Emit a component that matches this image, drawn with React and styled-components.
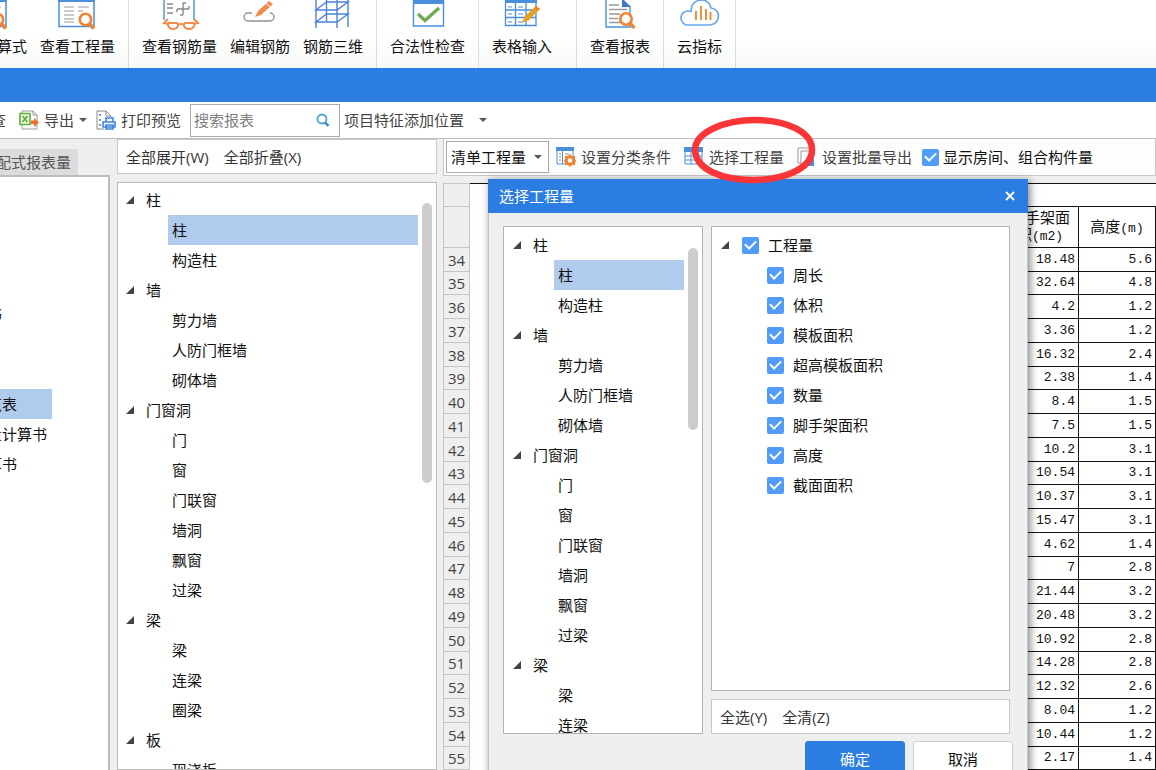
import React, { useState } from "react";
import styled, { createGlobalStyle } from "styled-components";

const GlobalStyle = createGlobalStyle`
  * {
    box-sizing: border-box;
  }

  body {
    margin: 0;
    font-family: "Open Sans", "Noto Sans CJK SC", sans-serif;
    font-size: 15px;
    line-height: 20px;
    color: #111;
    background: #efefef;
  }

  button,
  input,
  select {
    font: inherit;
    color: inherit;
  }
`;

const componentTree = [
  { name: "柱", children: ["柱", "构造柱"] },
  { name: "墙", children: ["剪力墙", "人防门框墙", "砌体墙"] },
  { name: "门窗洞", children: ["门", "窗", "门联窗", "墙洞", "飘窗", "过梁"] },
  { name: "梁", children: ["梁", "连梁", "圈梁"] },
  { name: "板", children: ["现浇板"] },
];

const quantities = [
  "周长",
  "体积",
  "模板面积",
  "超高模板面积",
  "数量",
  "脚手架面积",
  "高度",
  "截面面积",
];

const sheetRows = [
  [34, "18.48", "5.6"],
  [35, "32.64", "4.8"],
  [36, "4.2", "1.2"],
  [37, "3.36", "1.2"],
  [38, "16.32", "2.4"],
  [39, "2.38", "1.4"],
  [40, "8.4", "1.5"],
  [41, "7.5", "1.5"],
  [42, "10.2", "3.1"],
  [43, "10.54", "3.1"],
  [44, "10.37", "3.1"],
  [45, "15.47", "3.1"],
  [46, "4.62", "1.4"],
  [47, "7", "2.8"],
  [48, "21.44", "3.2"],
  [49, "20.48", "3.2"],
  [50, "10.92", "2.8"],
  [51, "14.28", "2.8"],
  [52, "12.32", "2.6"],
  [53, "8.04", "1.2"],
  [54, "10.44", "1.2"],
  [55, "2.17", "1.4"],
];

const BLUE = "#4a8fdc";
const ORANGE = "#f0832f";

function Magnifier({ x, y }) {
  return (
    <g transform={`translate(${x} ${y})`} stroke={ORANGE} fill="none">
      <circle r="5.7" strokeWidth="2.6" fill="#fff" />
      <path d="M4.3 4.5L8.3 9" strokeWidth="3.4" />
    </g>
  );
}

const ribbonIcons = {
  quantity: (
    <>
      <path d="M2 0V26.5H37V0" fill="#fff" stroke={BLUE} strokeWidth="1.5" />
      <path d="M1 0H38V2H1z" fill={BLUE} />
      <path
        d="M7 7H17M7 11H17M7 15H17M7 19H17M7 22H17M21 7H32M21 11H26"
        stroke="#9a9a9a"
        strokeWidth="1.2"
      />
      <Magnifier x={28.5} y={19.5} />
    </>
  ),
  rebar: (
    <>
      <path d="M4 20V-2M34 20V-2" stroke={BLUE} strokeWidth="1.4" />
      <path d="M7 4H13M7 8H13M7 13H13" stroke="#888" strokeWidth="1.3" />
      <path
        d="M23 3V15M17 9H29M17 12V9M29 6V9M23 3H26M23 15H20"
        stroke="#888"
        strokeWidth="1.4"
        fill="none"
      />
      <g fill="none" stroke="#f28a4b" strokeWidth="2">
        <path d="M9 23H16Q19 23 18 26Q17 29 13 29Q9 29 8 25Q7.500 23 9 23z" />
        <path d="M26 23H33Q35 23 34 26Q33 29 29 29Q25 29 24 26Q23.500 23 26 23z" />
        <path d="M18 25Q21 23 24 25M8 24L4 23L8 19M34 24L38 23L34 19" />
      </g>
    </>
  ),
  edit: (
    <>
      <path
        d="M12 13H8a4 4 0 0 0 0 8H30a4 4 0 0 0 0-8"
        fill="none"
        stroke="#8d939b"
        strokeWidth="1.4"
      />
      <path d="M15 17l3-6L29 1l4 3-12 11z" fill="#ef8b4d" />
      <path d="M26 3.500l4 3" stroke="#fff" />
    </>
  ),
  three: (
    <g fill="none" stroke="#4a82dc" strokeWidth="1.4">
      <path d="M3 -1V28M13.500 -1V22M24 -1V28M35 -1V27" />
      <path d="M3 10H24L35 2H13.500zM3 22H24L35 14H13.500z" />
    </g>
  ),
  check: (
    <>
      <path d="M5.500 0V26H35.500V0" fill="#fff" stroke={BLUE} strokeWidth="1.4" />
      <path d="M5 0H36V4H5z" fill={BLUE} />
      <path d="M10 14l7 6.500L31 8" fill="none" stroke="#70ad52" strokeWidth="3.4" />
    </>
  ),
  table: (
    <>
      <path d="M3.500 0H34V25.500H3.500z" fill="#fff" stroke={BLUE} strokeWidth="1.3" />
      <path d="M3 0H35V3H3z" fill={BLUE} />
      <path
        d="M3 10H34M3 17.500H34M13.500 3V26M24 3V26"
        stroke={BLUE}
        strokeWidth="1.3"
      />
      <path d="M6 7H10M16 7H21M6 14H10M16 14H21M6 22H10M16 22H21" stroke={BLUE} />
      <path d="M20 23l3-7L34 6l4 3-11 11z" fill="#e8a021" />
      <path d="M33 7l4 4" stroke="#fff" />
      <path d="M34 6l4 3-2 2-4-3z" fill={ORANGE} />
    </>
  ),
  report: (
    <>
      <path d="M6 0V27H30V7L23 0" fill="#fff" stroke={BLUE} strokeWidth="1.4" />
      <path d="M22 -1V7H31z" fill="#3c78c8" />
      <path
        d="M9 5H19M9 9.500H27M9 14H20M9 18.500H18M9 22.500H20"
        stroke="#9a9a9a"
        strokeWidth="1.3"
      />
      <Magnifier x={26} y={19} />
    </>
  ),
  cloud: (
    <>
      <path
        d="M11 25H8.500a7 7 0 0 1-1-14Q9 11 11 11.500Q11 1 21 0Q29 0 31 8Q38 9 38.500 16Q38 24 30 25z"
        fill="#fff"
        stroke="#6aa8ee"
        strokeWidth="1.7"
      />
      <path d="M16 20V11M21 20V6M26 20V9M30.500 20V12" stroke={ORANGE} strokeWidth="1.8" />
    </>
  ),
};

const smallIcons = {
  exporting: (
    <>
      <path d="M3 1H14L18 5V19H3z" fill="#fff" stroke="#999" />
      <path d="M14 1V5H18" fill="none" stroke="#999" />
      <path d="M1 3.500H11V14.500H1z" fill="#eefae8" stroke="#5cb036" strokeWidth="1.6" />
      <path d="M3.500 6l5 6M8.500 6l-5 6" stroke="#5cb036" strokeWidth="1.8" />
      <path d="M12 10.500H15V8l5 4.500-5 4.500V14H12z" fill="#f0702a" />
    </>
  ),
  print: (
    <>
      <path d="M8 19H1V1H10L15 6V7" fill="#fff" stroke="#888" />
      <path d="M10 1V6H15" fill="none" stroke="#888" />
      <path d="M3 5H5M3 10H5M3 15H5" stroke="#6d9ade" strokeWidth="2" />
      <path d="M10 8H17V12H10zM7 12H19V17H7zM10 15H17V19H10z" fill="#fff" stroke="#3d84e0" strokeWidth="1.6" />
    </>
  ),
  settings: (
    <>
      <path d="M1 1H17V17H1z" fill="#fff" stroke={BLUE} />
      <path d="M0 0H18V4H0zM6 4H7V17H6z" fill={BLUE} />
      <path d="M3 7H5M3 10H5M3 13H5M9 7H13M9 10H11" stroke="#888" />
      <path d="M14 7l2 2h3v3l1 2-1 2v2h-3l-2 2-2-2H9v-2l-1-2 1-2V9h3z" fill={ORANGE} />
      <circle cx="14" cy="13.500" r="2.300" fill="#fff" />
    </>
  ),
  grid: (
    <>
      <path d="M1 1H18V17H1z" fill="#fff" stroke={BLUE} />
      <path d="M0 0H19V5H0z" fill={BLUE} />
      <path d="M1 9H18M1 13H18M7 5V17M13 5V17" stroke={BLUE} />
    </>
  ),
  batch: (
    <>
      <path d="M4 16H1V1H14" fill="none" stroke="#999" />
      <path d="M4 4H14V18H4z" fill="#fff" stroke="#999" />
      <path d="M17 11V19H9z" fill={BLUE} />
    </>
  ),
};

const RibbonIcon = ({ name }) => (
  <svg width="40" height="32" viewBox="0 0 40 32" aria-hidden="true">
    {ribbonIcons[name]}
  </svg>
);

const SmallIcon = ({ name }) => (
  <svg width="20" height="20" viewBox="0 0 20 20" aria-hidden="true">
    {smallIcons[name]}
  </svg>
);

const Caret = () => (
  <CaretSvg width="8" height="4" viewBox="0 0 8 4" aria-hidden="true">
    <path d="M0 0H8L4 4z" fill="#555" />
  </CaretSvg>
);

const Arrow = () => (
  <svg width="8" height="8" viewBox="0 0 8 8" aria-hidden="true">
    <path d="M8 0V8H0z" fill="#444" />
  </svg>
);

function Tool({ icon, label, drop }) {
  return (
    <ToolButton type="button">
      {icon && <SmallIcon name={icon} />}
      {label}
      {drop && <Caret />}
    </ToolButton>
  );
}

function RibbonItem({ icon, label }) {
  return (
    <RibbonButton type="button">
      <RibbonIcon name={icon} />
      {label}
    </RibbonButton>
  );
}

function Tree({ narrow }) {
  const [selected, setSelected] = useState("0-0");
  return (
    <TreeList>
      {componentTree.map((group, i) => (
        <li key={group.name}>
          <TreeGroup>
            <Arrow />
            {group.name}
          </TreeGroup>
          <TreeChildren $narrow={narrow}>
            {group.children.map((child, j) => (
              <li key={child}>
                <TreeLeaf
                  type="button"
                  $active={selected === `${i}-${j}`}
                  onClick={() => setSelected(`${i}-${j}`)}
                >
                  {child}
                </TreeLeaf>
              </li>
            ))}
          </TreeChildren>
        </li>
      ))}
    </TreeList>
  );
}

function CheckRow({ label, root }) {
  return (
    <CheckLabel $root={root}>
      {root && <Arrow />}
      <Tick type="checkbox" defaultChecked />
      {label}
    </CheckLabel>
  );
}

function SelectDialog() {
  return (
    <Dialog role="dialog" aria-label="选择工程量">
      <DialogTitle>
        选择工程量
        <CloseButton type="button" aria-label="关闭">
          <svg width="10" height="10" viewBox="0 0 10 10">
            <path d="M1 1L9 9M9 1L1 9" stroke="#fff" strokeWidth="1.8" />
          </svg>
        </CloseButton>
      </DialogTitle>
      <DialogBody>
        <DialogTree>
          <Tree narrow />
          <Thumb $size={182} />
        </DialogTree>
        <DialogSide>
          <CheckPanel>
            <CheckRow label="工程量" root />
            {quantities.map((q) => (
              <CheckRow key={q} label={q} />
            ))}
          </CheckPanel>
          <ActionBar>
            <TextButton type="button">全选(Y)</TextButton>
            <TextButton type="button">全清(Z)</TextButton>
          </ActionBar>
        </DialogSide>
      </DialogBody>
      <DialogFooter>
        <FootButton type="button" $primary>
          确定
        </FootButton>
        <FootButton type="button">取消</FootButton>
      </DialogFooter>
    </Dialog>
  );
}

export default function App() {
  return (
    <Page>
      <GlobalStyle />
      <Ribbon>
        <RibbonGroup $first>
          <RibbonItem icon="quantity" label="查看计算式" />
          <RibbonItem icon="quantity" label="查看工程量" />
        </RibbonGroup>
        <RibbonGroup>
          <RibbonItem icon="rebar" label="查看钢筋量" />
          <RibbonItem icon="edit" label="编辑钢筋" />
          <RibbonItem icon="three" label="钢筋三维" />
        </RibbonGroup>
        <RibbonGroup>
          <RibbonItem icon="check" label="合法性检查" />
        </RibbonGroup>
        <RibbonGroup $wide>
          <RibbonItem icon="table" label="表格输入" />
        </RibbonGroup>
        <RibbonGroup>
          <RibbonItem icon="report" label="查看报表" />
        </RibbonGroup>
        <RibbonGroup>
          <RibbonItem icon="cloud" label="云指标" />
        </RibbonGroup>
      </Ribbon>
      <TitleBar />

      <Toolbar>
        <CutTool type="button">检查</CutTool>
        <Tool icon="exporting" label="导出" drop />
        <Tool icon="print" label="打印预览" />
        <SearchBox>
          <SearchInput type="search" placeholder="搜索报表" aria-label="搜索报表" />
          <svg width="14" height="14" viewBox="0 0 14 14" aria-hidden="true">
            <circle cx="6" cy="6" r="4.500" fill="none" stroke="#45a5d0" strokeWidth="1.8" />
            <path d="M9 9.500L12.500 13" stroke="#3b7fc4" strokeWidth="2.4" />
          </svg>
        </SearchBox>
        <PositionTool type="button">
          项目特征添加位置
          <Caret />
        </PositionTool>
      </Toolbar>

      <Workspace>
        <ReportColumn>
          <ReportTab>装配式报表量</ReportTab>
          <ReportPanel>
            <ReportItem $width={2}>计算书</ReportItem>
            <ReportGap />
            <ReportItem $width={52} $active>
              构件一览表
            </ReportItem>
            <ReportItem $width={47}>工程量计算书</ReportItem>
            <ReportItem $width={17}>计算书</ReportItem>
          </ReportPanel>
        </ReportColumn>

        <TreeColumn>
          <ActionBar>
            <TextButton type="button">全部展开(W)</TextButton>
            <TextButton type="button">全部折叠(X)</TextButton>
          </ActionBar>
          <TreePanel>
            <Tree />
            <Thumb $size={280} />
          </TreePanel>
        </TreeColumn>

        <SheetColumn>
          <SheetTools>
            <SelectBox>
              <select aria-label="工程量类型" defaultValue="list">
                <option value="list">清单工程量</option>
                <option value="quota">定额工程量</option>
              </select>
              <Caret />
            </SelectBox>
            <Tool icon="settings" label="设置分类条件" />
            <Tool icon="grid" label="选择工程量" />
            <Tool icon="batch" label="设置批量导出" />
            <ShowLabel>
              <Tick type="checkbox" defaultChecked />
              显示房间、组合构件量
            </ShowLabel>
          </SheetTools>
          <Sheet>
            <colgroup>
              <col width="27" />
              <col />
              <col width="77" />
              <col width="77" />
            </colgroup>
            <thead>
              <SheetTop>
                <th aria-label="行号" />
                <td />
                <td colSpan="2" />
              </SheetTop>
              <SheetHead>
                <th aria-label="行号" />
                <td />
                <th scope="col">
                  脚手架面积<Unit>(m2)</Unit>
                </th>
                <th scope="col">
                  高度<Unit>(m)</Unit>
                </th>
              </SheetHead>
            </thead>
            <tbody>
              {sheetRows.map(([no, area, height]) => (
                <SheetRow key={no}>
                  <th scope="row">{no}</th>
                  <td />
                  <td>{area}</td>
                  <td>{height}</td>
                </SheetRow>
              ))}
            </tbody>
          </Sheet>
        </SheetColumn>
      </Workspace>

      <SelectDialog />
      <Highlight viewBox="0 0 126 68" aria-hidden="true">
        <path
          d="M4 34C4 16 34 4 64 4C96 4 122 16 121 35C120 53 92 64 62 64C32 64 5 54 4 34z"
          fill="none"
          stroke="#fb3438"
          strokeWidth="6.5"
        />
      </Highlight>
    </Page>
  );
}

const Page = styled.div`
  position: relative;
  display: flex;
  flex-direction: column;
  height: 100vh;
  overflow: hidden;
`;

const Ribbon = styled.header`
  display: flex;
  flex: none;
  height: 68px;
  background: linear-gradient(#fff 40px, #f7f8f8);
`;

const RibbonGroup = styled.div`
  display: flex;
  justify-content: flex-end;
  gap: 13px;
  width: ${(props) => (props.$first ? "129px" : "auto")};
  padding: 0 ${(props) => (props.$wide ? "24px" : "13px")} 0 13px;
  border-right: 1px solid #dcdcdc;
`;

const RibbonButton = styled.button`
  display: flex;
  flex: none;
  flex-direction: column;
  align-items: center;
  gap: 4px;
  padding: 0;
  border: 0;
  background: none;
  white-space: nowrap;
`;

const TitleBar = styled.div`
  flex: none;
  height: 34px;
  background: #2b7de1;
`;

const Toolbar = styled.div`
  display: flex;
  flex: none;
  align-items: center;
  height: 36px;
  background: #fff;
  color: #333;
`;

const ToolButton = styled.button`
  display: flex;
  flex: none;
  align-items: center;
  gap: 5px;
  margin-right: 9px;
  padding: 0;
  border: 0;
  background: none;
  color: #444;
  white-space: nowrap;
`;

const CutTool = styled(ToolButton)`
  justify-content: flex-end;
  width: 6px;
  margin-right: 13px;
  overflow: hidden;
`;

const PositionTool = styled(ToolButton)`
  gap: 15px;
  margin-left: 4px;
`;

const CaretSvg = styled.svg`
  flex: none;
`;

const SearchBox = styled.div`
  display: flex;
  align-items: center;
  width: 150px;
  height: 33px;
  padding: 0 9px 0 3px;
  border: 1px solid #ababab;
`;

const SearchInput = styled.input`
  flex: 1;
  min-width: 0;
  padding: 0;
  border: 0;
  outline: 0;
  background: none;

  &::placeholder {
    color: #808080;
  }
`;

const Workspace = styled.main`
  display: flex;
  flex: 1;
  min-height: 0;
  border-top: 1px solid #bdbdbd;
`;

const ReportColumn = styled.aside`
  display: flex;
  flex: none;
  flex-direction: column;
  align-items: flex-start;
  width: 110px;
  margin-right: 7px;
  padding-top: 10px;
`;

const ReportTab = styled.div`
  display: flex;
  justify-content: flex-end;
  width: 78px;
  padding: 3px 7px 3px 0;
  overflow: hidden;
  background: #dcdcdc;
  color: #555;
  white-space: nowrap;
`;

const ReportPanel = styled.div`
  flex: 1;
  align-self: stretch;
  padding-top: 122px;
  border-top: 2px solid #bdbdbd;
  border-right: 2px solid #bdbdbd;
  background: #fff;
`;

const ReportItem = styled.div`
  display: flex;
  justify-content: flex-end;
  width: ${(props) => props.$width}px;
  padding: 5px 0;
  padding-right: ${(props) => (props.$active ? "35px" : "0")};
  overflow: hidden;
  background: ${(props) => (props.$active ? "#b1cbec" : "none")};
  white-space: nowrap;
`;

const ReportGap = styled.div`
  height: 60px;
`;

const TreeColumn = styled.section`
  display: flex;
  flex: none;
  flex-direction: column;
  gap: 8px;
  width: 320px;
  margin-right: 6px;
`;

const ActionBar = styled.div`
  display: flex;
  flex: none;
  align-items: center;
  gap: 15px;
  height: 35px;
  padding: 0 8px;
  border: 1px solid #c8c8c8;
  background: #fff;
`;

const TextButton = styled.button`
  padding: 0;
  border: 0;
  background: none;
  color: #333;
`;

const TreePanel = styled.div`
  display: flex;
  flex: 1;
  min-height: 0;
  padding: 2px 4px 0 8px;
  overflow: hidden;
  border: 1px solid #bababa;
  background: #fff;
`;

const Thumb = styled.div`
  flex: none;
  width: 10px;
  height: ${(props) => props.$size}px;
  margin-top: 18px;
  margin-left: 4px;
  border-radius: 5px;
  background: #cdcdcd;
`;

const TreeList = styled.ul`
  flex: 1;
  margin: 0;
  padding: 0;
  list-style: none;
`;

const TreeGroup = styled.div`
  display: flex;
  align-items: center;
  gap: 12px;
  height: 30px;
`;

const TreeChildren = styled.ul`
  margin: 0;
  padding-left: ${(props) => (props.$narrow ? "41px" : "42px")};
  list-style: none;
`;

const TreeLeaf = styled.button`
  display: block;
  width: 100%;
  height: 30px;
  padding: 0 4px;
  border: 0;
  background: ${(props) => (props.$active ? "#b1cbec" : "none")};
  text-align: left;
`;

const SheetColumn = styled.section`
  display: flex;
  flex: 1;
  flex-direction: column;
  gap: 7px;
  min-width: 0;
`;

const SheetTools = styled.div`
  display: flex;
  flex: none;
  align-items: center;
  height: 37px;
  padding-left: 2px;
  border: 1px solid #c8c8c8;
  border-top: 0;
  background: #fdfdfd;

  ${ToolButton} {
    margin-right: 13px;
  }
`;

const SelectBox = styled.div`
  display: grid;
  align-items: center;
  width: 103px;
  height: 32px;
  margin-right: 7px;
  border: 1px solid #aaa;
  background: #fff;

  > * {
    grid-area: 1 / 1;
  }

  select {
    width: 100%;
    height: 30px;
    padding: 0 0 0 4px;
    border: 0;
    appearance: none;
    background: none;
  }

  svg {
    justify-self: end;
    margin-right: 6px;
    pointer-events: none;
  }
`;

const ShowLabel = styled.label`
  display: flex;
  align-items: center;
  gap: 4px;
  margin-left: -3px;
  white-space: nowrap;
`;

const Tick = styled.input`
  display: grid;
  flex: none;
  place-items: center;
  width: 17px;
  height: 17px;
  margin: 0;
  border-radius: 2px;
  appearance: none;
  background: #519cf8;

  &:checked::before {
    content: "";
    width: 9px;
    height: 5px;
    margin-bottom: 3px;
    border-bottom: 2px solid #fff;
    border-left: 2px solid #fff;
    transform: rotate(-45deg);
  }
`;

const Sheet = styled.table`
  flex: none;
  width: 100%;
  table-layout: fixed;
  border-collapse: separate;
  border-spacing: 0;
  background: #fff;

  th,
  td {
    padding: 0;
    overflow: hidden;
  }

  th:first-child {
    border: 1px solid #c6c6c6;
    border-top: 0;
    background: #efefef;
    color: #444;
    font-weight: 400;
  }
`;

const SheetTop = styled.tr`
  height: 24px;

  && th {
    border-top: 1px solid #c6c6c6;
  }

  td {
    border-top: 1px solid #111;
  }

  td + td {
    border-bottom: 1px solid #111;
  }
`;

const SheetHead = styled.tr`
  height: 41px;

  td + th,
  th + th {
    padding: 0 6px;
    border-right: 1px solid #111;
    border-bottom: 1px solid #111;
    font-weight: 400;
    line-height: 17px;
    word-break: break-all;
  }
`;

const Unit = styled.span`
  font-family: "Liberation Mono", monospace;
  font-size: 13px;
`;

const SheetRow = styled.tr`
  height: 24px;

  &:nth-child(4n + 2) {
    height: 23px;
  }

  td + td {
    padding-right: 3px;
    border-right: 1px solid #111;
    border-bottom: 1px solid #111;
    font-family: "Liberation Mono", monospace;
    font-size: 13px;
    text-align: right;
  }
`;

const Dialog = styled.div`
  position: absolute;
  top: 179px;
  left: 488px;
  width: 540px;
  border: 1px solid #c4c8ce;
  border-top: 0;
  background: #efefef;
  box-shadow: 2px 2px 8px rgba(0, 0, 0, 0.5);
`;

const DialogTitle = styled.div`
  display: flex;
  align-items: center;
  justify-content: space-between;
  height: 34px;
  margin: 0 -1px;
  padding: 0 13px 0 11px;
  background: #2b7de1;
  color: #fff;
`;

const CloseButton = styled.button`
  display: flex;
  padding: 0;
  border: 0;
  background: none;
`;

const DialogBody = styled.div`
  display: flex;
  gap: 8px;
  height: 521px;
  padding: 13px 17px 0 14px;
`;

const DialogTree = styled.div`
  display: flex;
  flex: none;
  width: 200px;
  padding: 3px 4px 0 9px;
  overflow: hidden;
  border: 1px solid #b5b5b5;
  background: #fff;
`;

const DialogSide = styled.div`
  display: flex;
  flex: 1;
  flex-direction: column;
  gap: 8px;
`;

const CheckPanel = styled.div`
  flex: 1;
  padding: 3px 9px;
  border: 1px solid #b5b5b5;
  background: #fff;
`;

const CheckLabel = styled.label`
  display: flex;
  align-items: center;
  gap: ${(props) => (props.$root ? "13px" : "9px")};
  height: 30px;
  padding-left: ${(props) => (props.$root ? "0" : "46px")};

  ${Tick} {
    margin-right: ${(props) => (props.$root ? "-4px" : "0")};
  }
`;

const DialogFooter = styled.div`
  display: flex;
  justify-content: flex-end;
  gap: 8px;
  padding: 7px 14px 12px;
`;

const FootButton = styled.button`
  width: 100px;
  height: 35px;
  border: 1px solid ${(props) => (props.$primary ? "#2b7de1" : "#cfcfcf")};
  border-radius: 3px;
  background: ${(props) => (props.$primary ? "#2b7de1" : "#fff")};
  color: ${(props) => (props.$primary ? "#fff" : "#111")};
`;

// hand-drawn ring round the toolbar button
const Highlight = styled.svg`
  position: absolute;
  top: 116px;
  left: 691px;
  width: 126px;
  height: 68px;
  pointer-events: none;
`;
